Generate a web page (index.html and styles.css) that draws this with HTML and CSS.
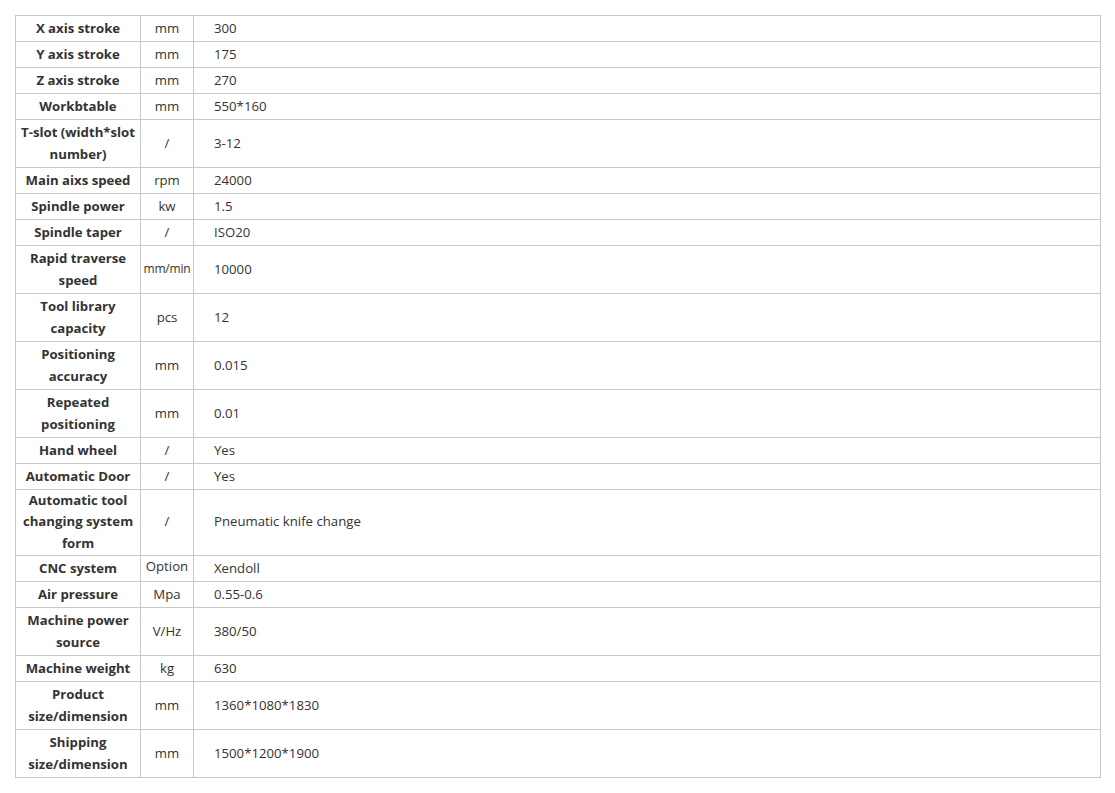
FILE: index.html
```html
<!DOCTYPE html>
<html>
<head>
<meta charset="utf-8">
<link rel="stylesheet" href="styles.css">
</head>
<body>
<div class="wrap">
<table class="spec">
<colgroup><col class="c1"><col class="c2"><col class="c3"></colgroup>
<tbody>
<tr><td class="name">X axis stroke</td><td class="unit">mm</td><td class="val">300</td></tr>
<tr><td class="name">Y axis stroke</td><td class="unit">mm</td><td class="val">175</td></tr>
<tr><td class="name">Z axis stroke</td><td class="unit">mm</td><td class="val">270</td></tr>
<tr><td class="name">Workbtable</td><td class="unit">mm</td><td class="val">550*160</td></tr>
<tr class="two"><td class="name">T-slot (width*slot number)</td><td class="unit">/</td><td class="val">3-12</td></tr>
<tr><td class="name">Main aixs speed</td><td class="unit">rpm</td><td class="val">24000</td></tr>
<tr><td class="name">Spindle power</td><td class="unit">kw</td><td class="val">1.5</td></tr>
<tr><td class="name">Spindle taper</td><td class="unit">/</td><td class="val">ISO20</td></tr>
<tr class="two"><td class="name">Rapid traverse speed</td><td class="unit small">mm/min</td><td class="val">10000</td></tr>
<tr class="two"><td class="name">Tool library capacity</td><td class="unit">pcs</td><td class="val">12</td></tr>
<tr class="two"><td class="name">Positioning accuracy</td><td class="unit">mm</td><td class="val">0.015</td></tr>
<tr class="two"><td class="name">Repeated positioning</td><td class="unit">mm</td><td class="val">0.01</td></tr>
<tr><td class="name">Hand wheel</td><td class="unit">/</td><td class="val">Yes</td></tr>
<tr><td class="name">Automatic Door</td><td class="unit">/</td><td class="val">Yes</td></tr>
<tr class="three"><td class="name">Automatic tool changing system form</td><td class="unit">/</td><td class="val">Pneumatic knife change</td></tr>
<tr><td class="name">CNC system</td><td class="unit up">Option</td><td class="val">Xendoll</td></tr>
<tr><td class="name">Air pressure</td><td class="unit">Mpa</td><td class="val">0.55-0.6</td></tr>
<tr class="two"><td class="name">Machine power source</td><td class="unit">V/Hz</td><td class="val">380/50</td></tr>
<tr><td class="name">Machine weight</td><td class="unit">kg</td><td class="val">630</td></tr>
<tr class="two"><td class="name">Product size/dimension</td><td class="unit">mm</td><td class="val">1360*1080*1830</td></tr>
<tr class="two"><td class="name">Shipping size/dimension</td><td class="unit">mm</td><td class="val">1500*1200*1900</td></tr>
</tbody>
</table>
</div>
</body>
</html>
```
FILE: styles.css
```css
html, body {
  margin: 0;
  padding: 0;
  background: #fff;
}
.wrap {
  padding: 15px 0 0 15px;
}
.spec {
  border-collapse: collapse;
  table-layout: fixed;
  width: 1085px;
  font-family: "Open Sans", "Noto Sans", sans-serif;
  font-size: 13.2px;
  color: #333;
}
.c1 { width: 125px; }
.c2 { width: 53px; }
.c3 { width: 907px; }
.spec td {
  border: 1px solid #c8c8c8;
  padding: 0 3px 1px;
  height: 24px;
  line-height: 22px;
  vertical-align: middle;
}
.spec tr.two td { height: 46px; }
.spec tr.three td { height: 64px; line-height: 21.4px; }
.name {
  font-weight: bold;
  text-align: center;
}
.unit {
  text-align: center;
}
.spec td.unit.small {
  font-size: 12px;
  padding: 0 0 1px;
  letter-spacing: -0.2px;
}
.spec td.unit.up {
  vertical-align: top;
  padding-top: 0;
  line-height: 20px;
}
.spec td.val {
  padding-left: 20px;
  text-align: left;
}
```
